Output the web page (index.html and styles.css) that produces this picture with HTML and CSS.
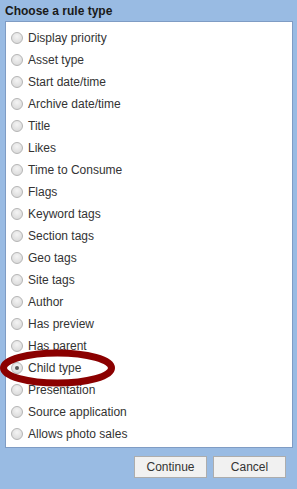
FILE: index.html
```html
<!DOCTYPE html>
<html>
<head>
<meta charset="utf-8">
<link rel="stylesheet" href="styles.css">
</head>
<body>
<div class="dialog">
  <div class="title">Choose a rule type</div>
  <div class="panel">
    <ul class="list">
      <li><span class="radio"></span>Display priority</li>
      <li><span class="radio"></span>Asset type</li>
      <li><span class="radio"></span>Start date/time</li>
      <li><span class="radio"></span>Archive date/time</li>
      <li><span class="radio"></span>Title</li>
      <li><span class="radio"></span>Likes</li>
      <li><span class="radio"></span>Time to Consume</li>
      <li><span class="radio"></span>Flags</li>
      <li><span class="radio"></span>Keyword tags</li>
      <li><span class="radio"></span>Section tags</li>
      <li><span class="radio"></span>Geo tags</li>
      <li><span class="radio"></span>Site tags</li>
      <li><span class="radio"></span>Author</li>
      <li><span class="radio"></span>Has preview</li>
      <li><span class="radio"></span>Has parent</li>
      <li class="marked"><span class="radio checked"></span>Child type
        <svg class="ring" width="118" height="42" viewBox="0 0 118 42"><ellipse cx="57.5" cy="21" rx="54" ry="15" fill="none" stroke="#8b0000" stroke-width="7"/></svg>
      </li>
      <li><span class="radio"></span>Presentation</li>
      <li><span class="radio"></span>Source application</li>
      <li><span class="radio"></span>Allows photo sales</li>
    </ul>
  </div>
  <div class="buttons">
    <button class="btn">Continue</button>
    <button class="btn">Cancel</button>
  </div>
</div>
</body>
</html>
```
FILE: styles.css
```css
html, body {
  margin: 0;
  padding: 0;
  background: #99bbe3;
  font-family: "Liberation Sans", Arial, sans-serif;
  font-size: 12px;
  color: #222;
}
.dialog {
  width: 297px;
  height: 489px;
}
.title {
  font-weight: bold;
  font-size: 12px;
  color: #1a1a1a;
  padding: 4px 0 0 5px;
  height: 17px;
  line-height: 14px;
}
.panel {
  margin: 0 4px 0 5px;
  background: #fff;
  border: 1px solid #7f9cc4;
  height: 427px;
  box-sizing: border-box;
}
.list {
  list-style: none;
  margin: 0;
  padding: 5px 0 0 0;
}
.list li {
  position: relative;
  height: 22px;
  display: flex;
  align-items: center;
  padding-left: 5px;
  color: #333;
}
.radio {
  width: 10px;
  height: 10px;
  border-radius: 50%;
  border: 1px solid #b5b5b5;
  background: radial-gradient(circle at 50% 35%, #f4f4f4 0%, #dedede 70%, #d2d2d2 100%);
  margin-right: 5px;
  flex: none;
  position: relative;
}
.radio.checked::after {
  content: "";
  position: absolute;
  left: 3px;
  top: 3px;
  width: 4px;
  height: 4px;
  border-radius: 50%;
  background: #555;
}
.ring {
  position: absolute;
  left: -6px;
  top: -10px;
}
.buttons {
  display: flex;
  justify-content: flex-end;
  gap: 6px;
  padding: 8px 11px 0 0;
}
.btn {
  font-family: "Liberation Sans", Arial, sans-serif;
  font-size: 12px;
  color: #333;
  background: #f1f1f1;
  border: 1px solid #adadad;
  height: 22px;
  padding: 0;
  width: 73px;
}
```
